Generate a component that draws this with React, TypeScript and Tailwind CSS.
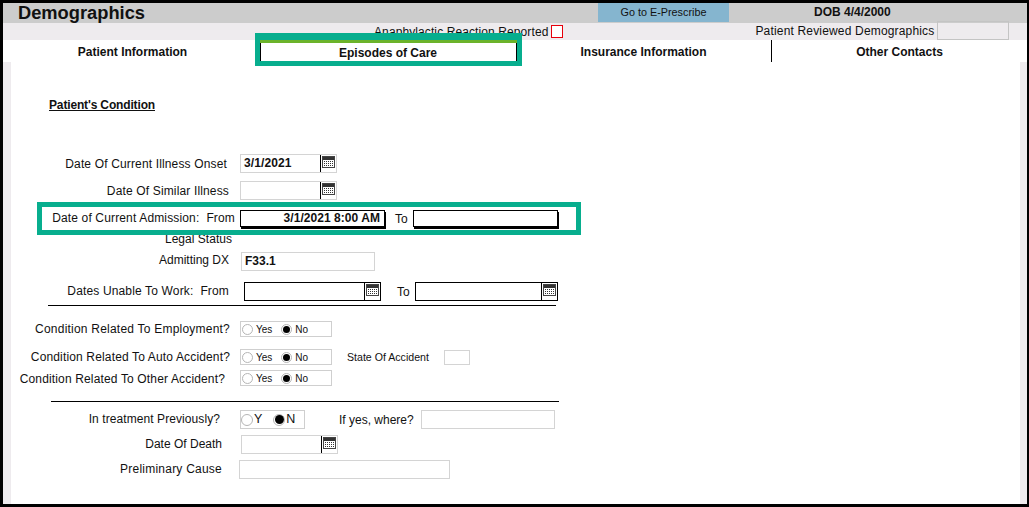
const font = "font-['Liberation_Sans',Arial,sans-serif]";

function CalIcon() {
  return (
    <svg width="13" height="12" viewBox="0 0 13 12" className="block">
      <rect x="0.5" y="0.5" width="12" height="11" fill="#fff" stroke="#444" />
      <rect x="1" y="1" width="11" height="3" fill="#333" />
      {[2, 4, 6, 8, 10].map((x) =>
        [5, 7, 9].map((y) => <rect key={x + '-' + y} x={x} y={y} width="1" height="1" fill="#333" />)
      )}
    </svg>
  );
}

function DateField({ value, w, dark, className }: { value?: string; w: string; dark?: boolean; className?: string }) {
  return (
    <div className={`flex h-[19px] ${w} ${dark ? 'border border-black' : 'border border-[#d4d4d4]'} ${className ?? ''}`}>
      <div className="flex-1 pl-[3px] text-[12px] leading-[17px] font-bold tracking-[0.1px]">{value}</div>
      <div className="w-[16px] border-l border-black pt-px pl-px">
        <CalIcon />
      </div>
    </div>
  );
}

function Radio({ on, label }: { on?: boolean; label: string }) {
  return (
    <span className="flex items-center gap-[3px] text-[10px]">
      <span className="flex h-[11px] w-[11px] items-center justify-center rounded-full border border-[#b5b5b5] bg-white">
        {on && <span className="h-[7px] w-[7px] rounded-full bg-black" />}
      </span>
      {label}
    </span>
  );
}

function BigRadio({ on, label }: { on?: boolean; label: string }) {
  return (
    <span className="flex items-center gap-px text-[12.5px]">
      <span className="flex h-[12px] w-[12px] items-center justify-center rounded-full border border-[#b5b5b5] bg-white">
        {on && <span className="h-[9px] w-[9px] rounded-full bg-black" />}
      </span>
      {label}
    </span>
  );
}

function YesNo({ className }: { className?: string }) {
  return (
    <div className={`flex h-[16px] w-[92px] items-center gap-[9px] border border-[#cfcfcf] pl-px ${className ?? ''}`}>
      <Radio label="Yes" />
      <Radio on label="No" />
    </div>
  );
}

function Label({ w, track, nudge, children }: { w: string; track?: string; nudge?: string; children: React.ReactNode }) {
  return <div className={`${w} ${track ?? 'tracking-[0.15px]'} ${nudge ?? '-mt-px'} shrink-0 text-right text-[12px] whitespace-nowrap`}>{children}</div>;
}

export default function App() {
  return (
    <div className={`relative flex h-[507px] w-[1029px] flex-col overflow-hidden border-t-[3px] border-r-2 border-b-[3px] border-l-[3px] border-black bg-white text-[#111] ${font}`}>
      {/* title bar */}
      <div className="flex h-[20px] shrink-0 items-center bg-[#cccccc]">
        <div className="ml-[15px] w-[580px] text-[18.3px] leading-none font-bold">Demographics</div>
        <div className="flex h-[19px] w-[131px] items-center justify-center self-start bg-[#85b5cf] text-[10.8px]">Go to E-Prescribe</div>
        <div className="ml-[85px] pb-[3px] text-[12px] font-bold">DOB 4/4/2000</div>
      </div>

      {/* anaphylactic band */}
      <div className="flex h-[17px] shrink-0 items-center bg-[#eeebee] text-[12px]">
        <span className="ml-[371px] tracking-[0.1px]">Anaphylactic Reaction Reported</span>
        <span className="ml-[3px] h-[13px] w-[12px] border border-red-600 bg-white" />
        <span className="ml-[192px] -mt-[2px] tracking-[0.17px]">Patient Reviewed Demographics</span>
        <span className="ml-[3px] -mt-[2px] h-[19px] w-[72px] border border-[#c4c4c4]" />
      </div>

      {/* tabs */}
      <div className="flex h-[22px] shrink-0 bg-white text-[12px] font-bold">
        <div className="w-[250px] pt-[3px] pl-[9px] text-center">Patient Information</div>
        <div className="w-[267px] pt-[4px] pl-[3px] text-center">Episodes of Care</div>
        <div className="w-[251px] pt-[3px] pr-[4px] text-center">Insurance Information</div>
        <div className="flex-1 border-l border-black pt-[3px] text-center">Other Contacts</div>
      </div>

      {/* form */}
      <div className="flex flex-1 bg-[#eeebee] pr-[7px] pl-[8px]">
        <div className="flex-1 bg-white">
          <div className="mt-[36px] ml-[38px] text-[12px] leading-[14px] font-bold tracking-[-0.15px] underline">Patient's Condition</div>

          <div className="mt-[42px] flex h-[19px] items-center">
            <Label w="w-[216px]" nudge="">Date Of Current Illness Onset</Label>
            <DateField value="3/1/2021" w="w-[97px]" className="ml-[13px]" />
          </div>
          <div className="mt-[8px] flex h-[19px] items-center">
            <Label w="w-[218px]" nudge="">Date Of Similar Illness</Label>
            <DateField w="w-[97px]" className="ml-[11px]" />
          </div>

          <div className="mt-[10px] flex h-[17px] items-center">
            <Label w="w-[224px]">Date of Current Admission:&nbsp; From</Label>
            <div className="ml-[5px] h-[17px] w-[145px] border border-black pr-[4px] text-right text-[12px] leading-[15px] font-bold tracking-[0.05px] shadow-[1px_2px_0_#000]">3/1/2021 8:00 AM</div>
            <span className="ml-[10px] text-[12px]">To</span>
            <div className="ml-[5px] h-[17px] w-[145px] border border-black shadow-[1px_2px_0_#000]" />
          </div>

          <div className="mt-[6px] flex h-[14px] leading-[14px]">
            <Label w="w-[221px]" track="tracking-[0.03px]">Legal Status</Label>
          </div>

          <div className="mt-[5px] flex h-[19px] items-start">
            <Label w="w-[218px]" track="tracking-[0px]">Admitting DX</Label>
            <div className="ml-[12px] h-[19px] w-[134px] border border-[#d4d4d4] pl-[3px] text-[12px] leading-[17px] font-bold">F33.1</div>
          </div>

          <div className="mt-[11px] flex h-[19px] items-center">
            <Label w="w-[218px]">Dates Unable To Work:&nbsp; From</Label>
            <DateField w="w-[137px]" dark className="ml-[15px]" />
            <span className="ml-[16px] text-[12px]">To</span>
            <DateField w="w-[143px]" dark className="ml-[5px]" />
          </div>

          <div className="mt-[4px] ml-[37px] h-px w-[508px] bg-black" />

          <div className="mt-[15px] flex h-[16px] items-center">
            <Label w="w-[219px]" track="tracking-[0.22px]">Condition Related To Employment?</Label>
            <YesNo className="ml-[10px]" />
          </div>
          <div className="mt-[12px] flex h-[16px] items-center">
            <Label w="w-[219px]">Condition Related To Auto Accident?</Label>
            <YesNo className="ml-[10px]" />
            <span className="ml-[15px] pt-px text-[10.6px]">State Of Accident</span>
            <div className="ml-[15px] h-[15px] w-[26px] border border-[#d4d4d4]" />
          </div>
          <div className="mt-[5px] flex h-[16px] items-center">
            <Label w="w-[214px]">
              <span className="relative top-[1px]">Condition Related To Other Accident?</span>
            </Label>
            <YesNo className="ml-[15px]" />
          </div>

          <div className="mt-[15px] ml-[40px] h-px w-[508px] bg-black" />

          <div className="mt-[8px] flex h-[19px] items-center">
            <Label w="w-[209px]" track="tracking-[0.08px]">In treatment Previously?</Label>
            <div className="ml-[20px] flex h-[19px] w-[65px] items-center gap-[11px] border border-[#cfcfcf]">
              <BigRadio label="Y" />
              <BigRadio on label="N" />
            </div>
            <span className="ml-[34px] text-[12px]">If yes, where?</span>
            <div className="ml-[7px] h-[19px] w-[134px] border border-[#d4d4d4]" />
          </div>
          <div className="mt-[6px] flex h-[19px] items-center">
            <Label w="w-[211px]" track="tracking-[0px]">Date Of Death</Label>
            <DateField w="w-[97px]" className="ml-[19px]" />
          </div>
          <div className="mt-[6px] flex h-[19px] items-center">
            <Label w="w-[211px]" track="tracking-[0.23px]">Preliminary Cause</Label>
            <div className="ml-[17px] h-[19px] w-[211px] border border-[#d4d4d4]" />
          </div>
        </div>
      </div>

      {/* annotation boxes drawn over the screenshot */}
      <div className="absolute top-[30px] left-[252px] flex h-[33px] w-[267px] flex-col border-[5px] border-t-[7px] border-[#07ae8e]">
        <div className="h-[3px] shrink-0 bg-[#6bb32a]" />
        <div className="flex-1 border-x border-black" />
      </div>
      <div className="absolute top-[199px] left-[34px] h-[33px] w-[544px] border-[5px] border-[#07ae8e]" />
    </div>
  );
}
